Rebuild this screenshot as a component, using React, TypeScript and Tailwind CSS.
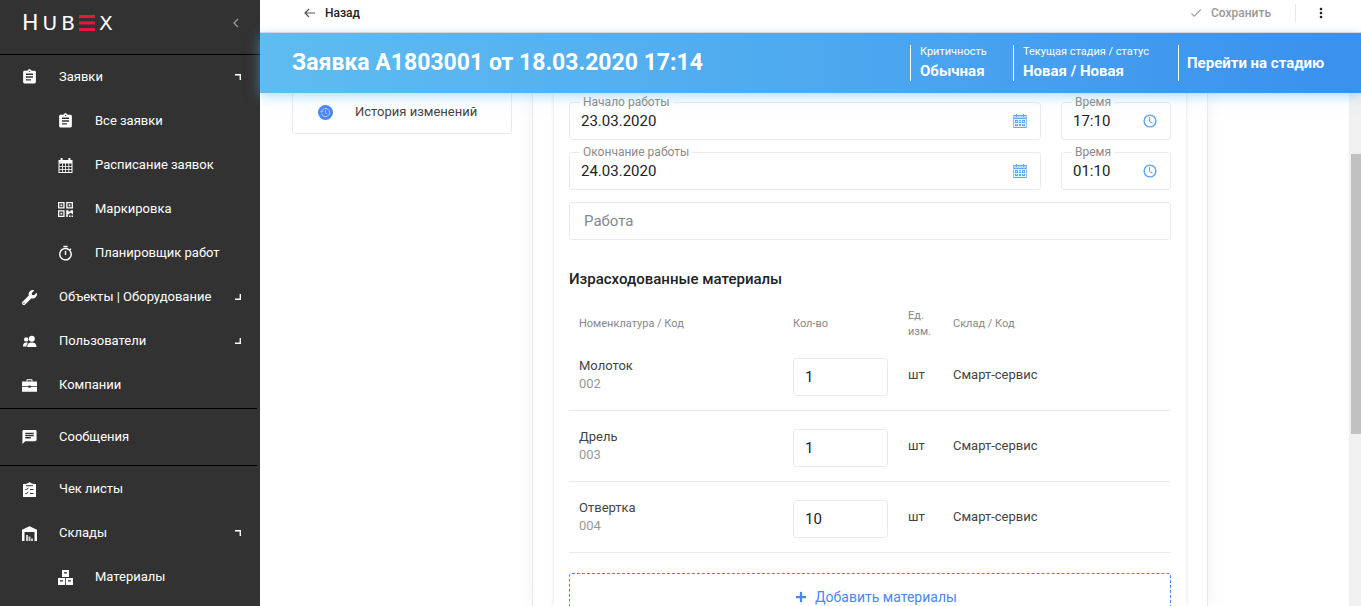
import type { ReactNode } from "react";
import { MdAssignment, MdChat, MdCheck, MdMoreVert, MdOutlineTimer } from "react-icons/md";
import { FaPlus, FaWrench } from "react-icons/fa";

type IconProps = { className?: string };

function MonthIcon({ className }: IconProps) {
  return (
    <svg viewBox="0 0 15 15" className={className} fill="currentColor" aria-hidden="true">
      <path d="M.500 2h14v13H.500zM1.500 5.500V8H4V5.500zm3.300 0V8h2.400V5.500zm3.200 0V8h2.400V5.500zm3.200 0V8h2.300V5.500zM1.500 8.800v2.200H4V8.800zm3.300 0v2.200h2.400V8.800zm3.200 0v2.200h2.400V8.800zm3.200 0v2.200h2.300V8.800zM1.500 11.800V14H4v-2.200zm3.300 0V14h2.400v-2.200zm3.200 0V14h2.400v-2.200zm3.200 0V14h2.300v-2.200z" fillRule="evenodd" />
      <path d="M2.600 0h2v3h-2zM10.400 0h2v3h-2z" />
    </svg>
  );
}

function QrIcon({ className }: IconProps) {
  return (
    <svg viewBox="0 0 15 15" className={className} fill="currentColor" aria-hidden="true">
      <path fillRule="evenodd" d="M0 0h6.600v6.600H0zM1.300 1.300v4h4v-4zM8.200 0h6.800v6.600H8.200zM9.500 1.300v4h4.200v-4zM0 8.200h6.600V15H0zM1.300 9.500v4.200h4V9.500z" />
      <path d="M2.500 2.500h1.700v1.700H2.500zM10.700 2.500h1.700v1.700h-1.700zM2.500 10.700h1.700v1.700H2.500zM8.200 8.200h2.300v1.300h2V8.200H15v4h-1.300v-1.200h-2.200v1.200h-1.700V15H8.200zM11 13.500h1.500V15H11zM13.500 13.500H15V15h-1.500z" />
    </svg>
  );
}

function UsersIcon({ className }: IconProps) {
  return (
    <svg viewBox="0 0 15 15" className={className} fill="currentColor" aria-hidden="true">
      <circle cx="4.200" cy="5.400" r="2.200" />
      <circle cx="9.800" cy="4.800" r="3" />
      <path d="M1 12.500c0-2.700 1-4 3.200-4 .8 0 1.300.1 1.700.4C4.900 9.800 4.500 11 4.500 12.500zM5.200 13c0-3 1.600-4.400 4.600-4.400s4.700 1.400 4.700 4.400z" />
    </svg>
  );
}

function CaseIcon({ className }: IconProps) {
  return (
    <svg viewBox="0 0 15 15" className={className} fill="currentColor" aria-hidden="true">
      <path d="M4.500 3.500V2.200c0-.6.400-1 1-1h4c.6 0 1 .4 1 1v1.300h-1V2.300h-4v1.200z" />
      <path d="M0 3.500h15v4.700H8.600V7.400H6.400v.8H0zM0 9h6.400v.8h2.200V9H15v4.700H0z" />
    </svg>
  );
}

function ChecklistIcon({ className }: IconProps) {
  return (
    <svg viewBox="0 0 15 15" className={className} aria-hidden="true">
      <path fill="currentColor" d="M1 2h3.500V1.200h1.700a1.400 1.400 0 0 1 2.600 0h1.700V2H14v13H1z" />
      <path stroke="#323232" fill="none" d="M4 3.700h7M3.300 7l1 1 2-2.200M3.300 11l1 1 2-2.200M8 7.500h3.500M8 11.500h3.500" />
    </svg>
  );
}

function WarehouseIcon({ className }: IconProps) {
  return (
    <svg viewBox="0 0 15 15" className={className} fill="currentColor" aria-hidden="true">
      <path d="M0 3.700 7.500.300 15 3.700V15h-2.500V6h-10v9H0z" />
      <path d="M4 9h2v6H4zM6.500 10.500h2V15h-2zM9 12.500h2V15H9z" opacity=".75" />
    </svg>
  );
}

function BoxesIcon({ className }: IconProps) {
  return (
    <svg viewBox="0 0 15 15" className={className} aria-hidden="true">
      <path fill="currentColor" d="M4 0h7v7H4zM0 8h7.100v7H0zM7.900 8H15v7H7.900z" />
      <path stroke="#323232" strokeWidth="1.200" d="M6 2.800h3M2 10.800h3M10 10.800h3" />
    </svg>
  );
}

function HistoryIcon() {
  return (
    <svg viewBox="0 0 15 15" className="size-[15px]" fill="none" aria-hidden="true">
      <circle cx="7.500" cy="7.500" r="7.500" fill="#4a86f7" />
      <path d="M3.600 6.200a4.100 4.100 0 1 1-.1 2.400M2.500 5.800l1.100 1.500 1.500-1M7.500 5v2.800l1.600 1" stroke="#b9d2ff" strokeWidth=".9" />
    </svg>
  );
}

function DateIcon() {
  return (
    <svg viewBox="0 0 14 14" className="size-[14px]" fill="none" aria-hidden="true">
      <path fill="#b8d8fb" d="M0 1h14v13H0z" />
      <path fill="#e6f1fe" d="M1 5h12v8H1z" />
      <path d="M0 1.500h14M0 4.500h14M0 13.500h14" stroke="#62a8f6" />
      <path d="M.500 1v13M13.500 1v13" stroke="#8fc1f9" />
      <path d="M3.500 0v3M10.500 0v3" stroke="#62a8f6" />
      <path
        fill="#62a8f6"
        fillRule="evenodd"
        d="M2 6h3v3H2zM3 7v1h1V7zM6 6h2v3H6zM9 6h3v3H9zM10 7v1h1V7zM2 10h3v2H2zM6 10h2v2H6zM9 10h3v2H9z"
      />
      <path fill="#b8d8fb" d="M3 10h1v1H3zM6 7h2v1H6zM10 10h1v1h-1z" />
    </svg>
  );
}

function ClockIcon() {
  return (
    <svg viewBox="0 0 14 14" className="size-[14px]" fill="none" stroke="#5ba3f5" aria-hidden="true">
      <circle cx="7" cy="7" r="5.900" strokeWidth="1.400" />
      <path d="M6.500 3v4.500L9.500 9" />
    </svg>
  );
}

function Corner({ open }: { open: boolean }) {
  return (
    <svg viewBox="0 0 6 6" className="ml-auto size-[6px]" fill="none" stroke="#fff" strokeWidth="1.400" aria-hidden="true">
      <path d={open ? "M0 .700h5.300V6" : "M0 5.300h5.300V0"} />
    </svg>
  );
}

type NavItemProps = { icon: ReactNode; label: string; nested?: boolean; open?: boolean };

function NavItem({ icon, label, nested = false, open }: NavItemProps) {
  return (
    <li>
      <a
        href="#"
        className={`flex h-11 items-center pr-4 text-[13px] text-white ${nested ? "pl-[57px]" : "pl-[21px]"}`}
      >
        <span className="flex w-[17px] shrink-0 justify-center">{icon}</span>
        <span className="ml-[21px] whitespace-nowrap">{label}</span>
        {open !== undefined && <Corner open={open} />}
      </a>
    </li>
  );
}

function Sidebar() {
  return (
    <aside className="w-[260px] shrink-0 overflow-hidden bg-[#323232]">
      <div className="flex h-[55px] items-start justify-between border-b border-black pr-[21px] pl-[22px] pt-3">
        <a href="#" aria-label="HUBEX" className="flex h-[22px] items-center gap-1 font-['DejaVu_Sans',sans-serif] text-[20px] leading-[22px] text-white">
          <span className="text-[22px]">H</span>
          <span>U</span>
          <span>B</span>
          <svg viewBox="0 0 16 16" className="size-4" fill="#e8173d" aria-hidden="true">
            <path d="M0 0h16v3H0zM0 6.500h16v3H0zM0 13h16v3H0z" />
          </svg>
          <span>X</span>
        </a>
        <button type="button" aria-label="Свернуть меню" className="flex h-[22px] items-center">
          <svg viewBox="0 0 6 10" className="h-[10px] w-[6px]" fill="none" stroke="#999" strokeWidth="1.300" aria-hidden="true">
            <path d="M5 1 1 5l4 4" />
          </svg>
        </button>
      </div>
      <nav className="w-[257px]">
        <ul className="h-[353px]">
          <NavItem icon={<MdAssignment className="size-[18px]" />} label="Заявки" open />
          <NavItem nested icon={<MdAssignment className="size-[18px]" />} label="Все заявки" />
          <NavItem nested icon={<MonthIcon className="size-[15px]" />} label="Расписание заявок" />
          <NavItem nested icon={<QrIcon className="size-[15px]" />} label="Маркировка" />
          <NavItem nested icon={<MdOutlineTimer className="size-[17px]" />} label="Планировщик работ" />
          <NavItem icon={<FaWrench className="size-[15px]" />} label="Объекты | Оборудование" open={false} />
          <NavItem icon={<UsersIcon className="size-[15px]" />} label="Пользователи" open={false} />
          <NavItem icon={<CaseIcon className="size-[15px]" />} label="Компании" />
        </ul>
        <ul className="border-y border-black py-[6px]">
          <NavItem icon={<MdChat className="size-[18px]" />} label="Сообщения" />
        </ul>
        <ul className="pt-px">
          <NavItem icon={<ChecklistIcon className="size-[15px]" />} label="Чек листы" />
          <NavItem icon={<WarehouseIcon className="size-[15px]" />} label="Склады" open />
          <NavItem nested icon={<BoxesIcon className="size-[15px]" />} label="Материалы" />
        </ul>
      </nav>
    </aside>
  );
}

function TopBar() {
  return (
    <header className="flex h-[33px] shrink-0 items-start border-b border-[#e0e0e0] bg-white pr-8 pl-[44px] text-xs font-medium leading-6">
      <button type="button" className="flex h-[25px] items-center gap-[10px] text-[#222]">
        <svg viewBox="0 0 11 10" className="h-[10px] w-[11px]" fill="none" stroke="#555" strokeWidth="1.200" aria-hidden="true">
          <path d="M11 5H1M5 1 1 5l4 4" />
        </svg>
        Назад
      </button>
      <button type="button" className="ml-auto flex h-[25px] items-center gap-2 text-[#999]">
        <MdCheck className="size-[14px]" />
        Сохранить
      </button>
      <span className="mt-1 ml-6 h-[18px] w-px bg-[#e8e8e8]" />
      <button type="button" aria-label="Ещё" className="ml-[17px] flex h-[26px] items-center text-[#222]">
        <MdMoreVert className="size-4" />
      </button>
    </header>
  );
}

function Banner() {
  return (
    <section className="relative z-10 flex h-[60px] shrink-0 items-center justify-between bg-linear-to-r from-[#5ebcf1] via-[#4ea9ef] to-[#3a90ee] pl-8 text-white shadow-[0_3px_12px_rgba(94,188,241,0.5)]">
      <h1 className="text-[23px] leading-8 font-bold">Заявка A1803001 от 18.03.2020 17:14</h1>
      <div className="flex h-9 shrink-0 whitespace-nowrap">
        <dl className="w-[103px] border-l border-white pl-[9px]">
          <dt className="text-[11px] leading-[14px]">Критичность</dt>
          <dd className="text-[15px] leading-6 font-bold">Обычная</dd>
        </dl>
        <dl className="w-[165px] border-l border-white pl-[9px]">
          <dt className="text-[11px] leading-[14px]">Текущая стадия / статус</dt>
          <dd className="text-[15px] leading-6 font-bold">Новая / Новая</dd>
        </dl>
        <button type="button" className="w-[183px] border-l border-white pl-2 text-left text-[15px] font-bold">
          Перейти на стадию
        </button>
      </div>
    </section>
  );
}

type FieldProps = { id: string; label: string; value: string; icon: ReactNode; action: string; className: string };

function Field({ id, label, value, icon, action, className }: FieldProps) {
  return (
    <div className={`relative flex h-[38px] items-center rounded-[3px] border border-[#ebebeb] pl-[11px] pr-[13px] ${className}`}>
      <label htmlFor={id} className="absolute -top-2 left-[10px] bg-white px-[3px] text-xs leading-[14px] text-[#8a8a8a]">
        {label}
      </label>
      <input id={id} defaultValue={value} className="min-w-0 flex-1 text-[15px] text-[#222] outline-none" />
      <button type="button" aria-label={action}>{icon}</button>
    </div>
  );
}

const periods = [
  { key: "start", label: "Начало работы", date: "23.03.2020", time: "17:10" },
  { key: "end", label: "Окончание работы", date: "24.03.2020", time: "01:10" },
];

const materials = [
  { name: "Молоток", code: "002", qty: "1" },
  { name: "Дрель", code: "003", qty: "1" },
  { name: "Отвертка", code: "004", qty: "10" },
];

function WorkForm() {
  return (
    <form className="flex flex-col px-[15px] pt-[9px]">
      <div className="flex flex-col gap-3">
        {periods.map((p) => (
          <div key={p.key} className="flex gap-5">
            <Field id={`${p.key}-date`} label={p.label} value={p.date} icon={<DateIcon />} action="Выбрать дату" className="flex-1" />
            <Field id={`${p.key}-time`} label="Время" value={p.time} icon={<ClockIcon />} action="Выбрать время" className="w-[110px]" />
          </div>
        ))}
        <input
          aria-label="Работа"
          placeholder="Работа"
          className="h-[38px] w-full rounded-[3px] border border-[#ebebeb] px-[14px] text-[15px] outline-none placeholder:text-[#888]"
        />
      </div>
      <h2 className="mt-[27px] text-[15px] leading-6 font-medium text-[#222]">Израсходованные материалы</h2>
      <table className="mt-4 w-full table-fixed border-separate border-spacing-0 text-left">
        <thead>
          <tr className="h-[33px] text-[11px] leading-4 text-[#888]">
            <th className="w-[214px] px-[10px] font-normal">Номенклатура / Код</th>
            <th className="w-[115px] px-[10px] font-normal">Кол-во</th>
            <th className="w-[45px] pl-[10px] font-normal">Ед. изм.</th>
            <th className="px-[10px] font-normal">Склад / Код</th>
          </tr>
        </thead>
        <tbody>
          {materials.map((m) => (
            <tr key={m.code} className="h-[71px] text-[13px] leading-[18px] text-[#444]">
              <td className="border-b border-[#e8ecf1] px-[10px]">
                <div>{m.name}</div>
                <div className="text-[#999]">{m.code}</div>
              </td>
              <td className="border-b border-[#e8ecf1] px-[10px] pt-1">
                <input
                  aria-label={`Кол-во: ${m.name}`}
                  defaultValue={m.qty}
                  className="block h-[38px] w-full rounded-[3px] border border-[#ebebeb] px-[11px] text-[15px] text-[#222] outline-none"
                />
              </td>
              <td className="border-b border-[#e8ecf1] pl-[10px]">шт</td>
              <td className="border-b border-[#e8ecf1] px-[10px]">Смарт-сервис</td>
            </tr>
          ))}
        </tbody>
      </table>
      <button
        type="button"
        className="mt-5 flex h-12 items-center justify-center gap-2 rounded-[3px] border border-dashed border-[#4a86f7] pl-3 text-sm text-[#4a86f7]"
      >
        <FaPlus className="size-3" />
        Добавить материалы
      </button>
    </form>
  );
}

export default function App() {
  return (
    <div className="flex h-screen overflow-hidden bg-white font-[Roboto,'Liberation_Sans',sans-serif]">
      <Sidebar />
      <div className="flex min-w-0 flex-1 flex-col">
        <TopBar />
        <Banner />
        <div className="flex min-h-0 flex-1">
          <main className="flex min-w-0 flex-1 gap-5 overflow-hidden pr-[141px] pl-8">
            <div className="w-[220px] shrink-0">
              <a href="#" className="flex h-[41px] items-center rounded-b-[3px] border border-t-0 border-[#ebebeb] pb-[2px] pl-[25px] text-[13px] text-[#444]">
                <HistoryIcon />
                <span className="ml-[22px]">История изменений</span>
              </a>
            </div>
            <div className="min-w-0 flex-1 border-x border-[#e8ecf1] px-[21px] shadow-[0_0_16px_rgba(0,0,0,0.06)]">
              <div className="h-full shadow-[0_0_4px_rgba(0,0,0,0.12)]">
                <WorkForm />
              </div>
            </div>
          </main>
          <div className="w-3 shrink-0 bg-[#f0f0f0] pt-[61px] pl-[2px]">
            <div className="h-[280px] bg-[#c1c1c1]" />
          </div>
        </div>
      </div>
    </div>
  );
}
